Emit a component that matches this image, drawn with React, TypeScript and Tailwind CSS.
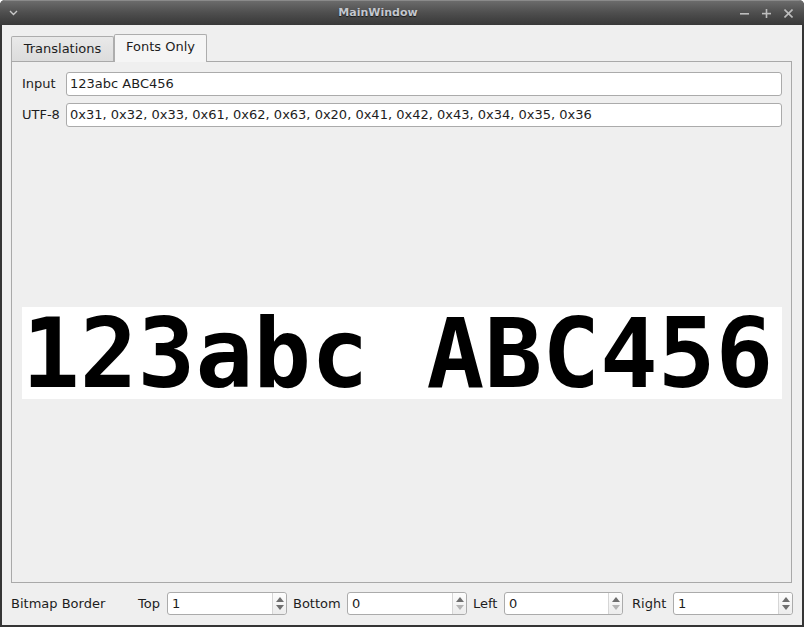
import React from "react";

function Arrows({ downDisabled }: { downDisabled?: boolean }) {
  return (
    <div className="w-[14px] h-full flex flex-col items-center justify-center gap-[3px] border-l border-[#d6d6d6] bg-gradient-to-b from-[#fdfdfd] to-[#ececec] rounded-r-[3px]">
      <svg width="8" height="5" viewBox="0 0 8 5">
        <polygon points="0,5 8,5 4,0" fill="#6e6e6e" />
      </svg>
      <svg width="8" height="5" viewBox="0 0 8 5">
        <polygon points="0,0 8,0 4,5" fill={downDisabled ? "#b4b4b4" : "#6e6e6e"} />
      </svg>
    </div>
  );
}

function Spin({ value, w }: { value: string; w: string }) {
  return (
    <div className={`${w} h-[23px] flex bg-white border border-[#ababab] rounded-[3px]`}>
      <div className="flex-1 flex items-center pl-[4px]">{value}</div>
      <Arrows downDisabled={value === "0"} />
    </div>
  );
}

export default function App() {
  return (
    <div className="w-[804px] h-[627px] flex flex-col bg-[#353535] rounded-t-[5px] overflow-hidden font-['DejaVu_Sans',sans-serif] text-[13px] text-[#1d1d1d]">
      {/* title bar */}
      <div className="h-[25px] flex items-center bg-gradient-to-b from-[#6b6b6b] via-[#4e4e4e] to-[#383838] border-t border-[#8a8a8a]">
        <div className="w-[26px] flex justify-center pl-[1px]">
          <svg width="9" height="6" viewBox="0 0 9 6">
            <polyline points="1,1 4.5,4.5 8,1" fill="none" stroke="#c9c9c9" strokeWidth="1.4" />
          </svg>
        </div>
        <div className="flex-1 flex justify-center">
          <span className="font-bold text-[11px] text-[#c4c7cf] [text-shadow:0_1px_1px_#1a1a1a]">MainWindow</span>
        </div>
        <div className="w-[74px] flex items-center gap-[13px] pl-[10px]">
          <svg width="9" height="9" viewBox="0 0 9 9">
            <rect x="0" y="4" width="9" height="1.6" fill="#bdbdbd" />
          </svg>
          <svg width="9" height="9" viewBox="0 0 9 9">
            <rect x="0" y="3.8" width="9" height="1.6" fill="#bdbdbd" />
            <rect x="3.7" y="0" width="1.6" height="9" fill="#bdbdbd" />
          </svg>
          <svg width="9" height="9" viewBox="0 0 9 9">
            <line x1="0.5" y1="0.5" x2="8.5" y2="8.5" stroke="#bdbdbd" strokeWidth="1.6" />
            <line x1="8.5" y1="0.5" x2="0.5" y2="8.5" stroke="#bdbdbd" strokeWidth="1.6" />
          </svg>
        </div>
      </div>

      {/* body */}
      <div className="flex-1 mx-[2px] mb-[2px] bg-[#efefef] flex flex-col pl-[9px] pr-[9px] pt-[9px]">
        {/* tabs */}
        <div className="h-[27px] flex items-end">
          <div className="h-[25px] w-[103px] flex items-center justify-center border border-b-0 border-[#adadad] rounded-t-[2px] bg-gradient-to-b from-[#e9e9e9] to-[#dcdcdc]">
            Translations
          </div>
          <div className="relative z-10 h-[28px] w-[93px] -mb-[1px] flex items-center justify-center pb-[3px] border border-b-0 border-[#adadad] rounded-t-[2px] bg-[#f5f5f5]">
            Fonts Only
          </div>
        </div>

        {/* pane */}
        <div className="w-[781px] h-[522px] border border-[#a9a9a9] flex flex-col pt-[10px] pl-[10px] pr-[9px]">
          <div className="grid grid-cols-[38px_1fr] gap-x-[6px] gap-y-[7px]">
            <div className="h-[24px] flex items-center">Input</div>
            <div className="h-[24px] flex items-center bg-white border border-[#ababab] rounded-[3px] pl-[3px]">123abc ABC456</div>
            <div className="h-[24px] flex items-center">UTF-8</div>
            <div className="h-[24px] flex items-center bg-white border border-[#ababab] rounded-[3px] pl-[3px]">
              0x31, 0x32, 0x33, 0x61, 0x62, 0x63, 0x20, 0x41, 0x42, 0x43, 0x34, 0x35, 0x36
            </div>
          </div>
          <div className="flex-1 flex items-center pb-[3px]">
            <div className="w-[760px] h-[92px] bg-white pt-[2px]">
              <div className="font-['DejaVu_Sans_Mono',monospace] font-bold text-[96px] leading-[90px] text-black whitespace-pre">
                123abc ABC456
              </div>
            </div>
          </div>
        </div>

        {/* bottom row */}
        <div className="mt-[9px] h-[23px] flex items-center">
          <div className="w-[127px]">Bitmap Border</div>
          <div className="w-[29px]">Top</div>
          <Spin value="1" w="w-[120px]" />
          <div className="w-[54px] ml-[6px]">Bottom</div>
          <Spin value="0" w="w-[120px]" />
          <div className="w-[31px] ml-[6px]">Left</div>
          <Spin value="0" w="w-[119px]" />
          <div className="w-[41px] ml-[9px]">Right</div>
          <Spin value="1" w="w-[120px]" />
        </div>
      </div>
    </div>
  );
}
